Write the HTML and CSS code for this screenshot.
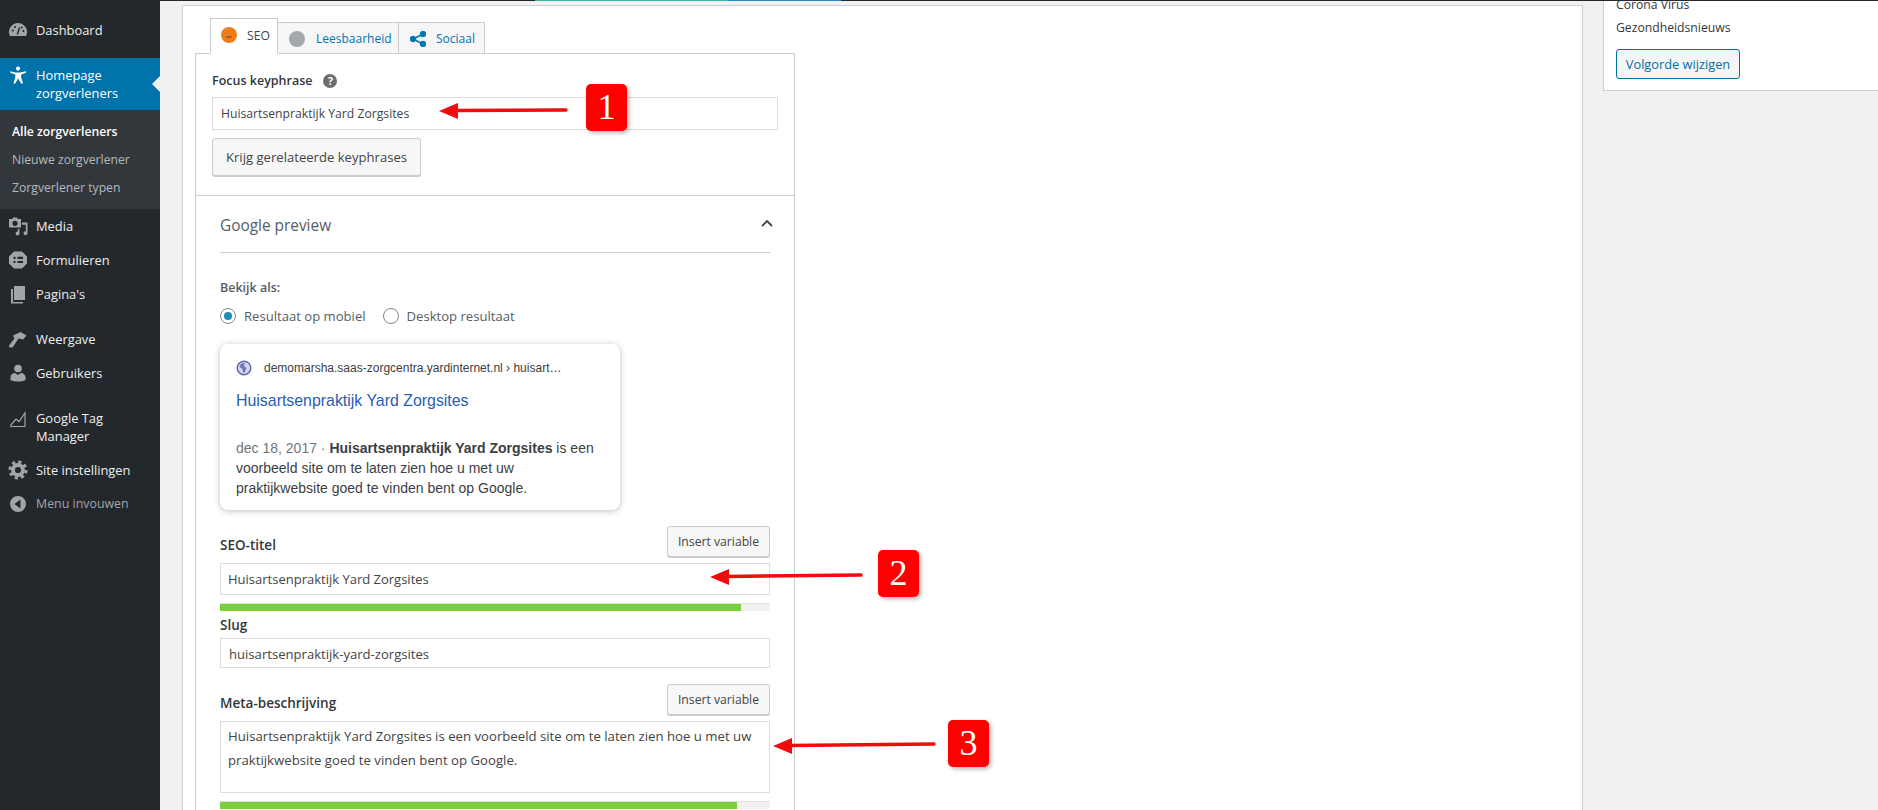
FILE: index.html
```html
<!DOCTYPE html>
<html lang="nl">
<head>
<meta charset="utf-8">
<title>Homepage zorgverleners</title>
<link rel="stylesheet" href="styles.css">
</head>
<body>
<div class="page">
  <div class="strip"><i class="s-dark-a"></i><i class="s-teal"></i><i class="s-blue"></i><i class="s-dark-b"></i></div>
  <div class="layout">
    <nav class="menu">
      <a class="mi"><svg class="ic" viewBox="0 0 20 20"><path d="M10 3a9 9 0 0 0-8.600 11.700c.3.900 1 1.300 1.700 1.300h13.800c.7 0 1.400-.4 1.700-1.300A9 9 0 0 0 10 3z"/><path class="cut" d="M9.300 14.500 11.600 7.500" stroke-width="1.400"/><circle class="cutf" cx="4.800" cy="10.500" r="1"/><circle class="cutf" cx="7" cy="7" r="1"/><circle class="cutf" cx="13.800" cy="7.600" r="1"/><circle class="cutf" cx="15.400" cy="11" r="1"/></svg><span>Dashboard</span></a>
      <div class="group">
        <a class="mi active"><svg class="ic" viewBox="0 0 20 20"><circle cx="10" cy="3.600" r="2.100"/><path d="M2.200 6.200 7.600 7.400h4.800l5.400-1.200.4 1.500-5 1.700v3l1.900 6.200h-1.900L10 13.400l-2.700 5.200H5.400l1.900-6.200v-3l-5-1.700z"/></svg><span>Homepage zorgverleners</span></a>
        <div class="sub">
          <a class="si on">Alle zorgverleners</a>
          <a class="si">Nieuwe zorgverlener</a>
          <a class="si">Zorgverlener typen</a>
        </div>
      </div>
      <a class="mi"><svg class="ic" viewBox="0 0 20 20"><path d="M1 3h3.200l1-1.500h3.600l1 1.500H13v8.500H1zm6 1.700a2.600 2.600 0 1 0 0 5.200 2.600 2.600 0 0 0 0-5.200z" fill-rule="evenodd"/><path d="M14 6.500h5.500v10.700a2 2 0 1 1-1.700-2V8.800H14z"/><path d="M11.500 13v4.500a2 2 0 1 1-1.700-2V13z"/></svg><span>Media</span></a>
      <a class="mi"><svg class="ic" viewBox="0 0 20 20"><path d="M6 1.500h8l5 5v7l-5 5H6l-5-5v-7z" stroke-linejoin="round"/><path class="cut" d="M5.500 7.800h2M9.500 7.800h5.500M5.500 12h2M9.500 12h5.500" stroke-width="2.200"/></svg><span>Formulieren</span></a>
      <a class="mi"><svg class="ic" viewBox="0 0 20 20"><path d="M6 2h11v14H6z"/><path d="M3 5h2v13h10v1.500H3z"/></svg><span>Pagina's</span></a>
      <a class="mi sep"><svg class="ic" viewBox="0 0 20 20"><path d="M5 6.500 12.500 3l6 3.500-3.500 4-4.500-1L4.500 18.500H1.500L1 16.500l5.500-7z"/></svg><span>Weergave</span></a>
      <a class="mi"><svg class="ic" viewBox="0 0 20 20"><circle cx="10" cy="5.500" r="3.800"/><path d="M2.500 17v-2.500c0-3 2.500-4.500 4.500-4.500l3 2 3-2c2 0 4.500 1.500 4.500 4.500V17c-2 1-5 1.500-7.500 1.500S4.500 18 2.500 17z"/></svg><span>Gebruikers</span></a>
      <a class="mi sep"><svg class="ic line" viewBox="0 0 20 20"><path d="M2 18.500h15.500M2.500 17.500 8 11l3 2.500L17 5v13" stroke-width="1.200"/></svg><span>Google Tag Manager</span></a>
      <a class="mi"><svg class="ic line" viewBox="0 0 20 20"><circle cx="10" cy="10" r="8" stroke-width="3" stroke-dasharray="3.200 3.080"/><circle cx="10" cy="10" r="5" stroke-width="3.800"/></svg><span>Site instellingen</span></a>
      <a class="mi collapse"><svg class="ic" viewBox="0 0 20 20"><path fill-rule="evenodd" d="M10 2a8 8 0 1 1 0 16 8 8 0 0 1 0-16zM12.500 5.500 6.500 10l6 4.500z"/></svg><span>Menu invouwen</span></a>
    </nav>

    <main class="content">
      <section class="post">
        <div class="tabs">
          <div class="tab current"><span class="dot orange"><i class="face"></i></span><span>SEO</span></div>
          <div class="tab t-read"><span class="dot gray"></span><span class="tl">Leesbaarheid</span></div>
          <div class="tab t-social"><svg class="share" viewBox="0 0 16 16"><circle cx="13" cy="3" r="2.800"/><circle cx="3" cy="8" r="2.800"/><circle cx="13" cy="13" r="2.800"/><path d="M13 3 3 8l10 5" fill="none" stroke-width="1.600"/></svg><span class="tl">Sociaal</span></div>
        </div>
        <div class="panel">
          <div class="focus">
            <div class="focus-label"><label class="lbl">Focus keyphrase</label><span class="help">?</span></div>
            <div class="field f-focus">Huisartsenpraktijk Yard Zorgsites</div>
            <button class="btn btn-big">Krijg gerelateerde keyphrases</button>
          </div>
          <div class="preview">
            <div class="pv-head"><span class="pv-title">Google preview</span><svg class="chev" viewBox="0 0 14 10"><path d="M2 8 7 3l5 5" fill="none"/></svg></div>
            <div class="lbl lbl-view">Bekijk als:</div>
            <div class="radios">
              <span class="radio checked"></span><span class="rl">Resultaat op mobiel</span>
              <span class="radio second"></span><span class="rl">Desktop resultaat</span>
            </div>
            <article class="card">
              <div class="c-url"><svg class="globe" viewBox="0 0 16 16"><circle cx="8" cy="8" r="6.800" fill="#d4d8ee" stroke="#5f6bab" stroke-width="1.500"/><path d="M5 3.500 9 3 8 6 10.500 8 9 12 7 13 6.500 9 3.500 7z" fill="#6f7ab8"/></svg><span>demomarsha.saas-zorgcentra.yardinternet.nl › huisart…</span></div>
              <div class="c-title">Huisartsenpraktijk Yard Zorgsites</div>
              <p class="c-text"><span class="c-date">dec 18, 2017 · </span><b>Huisartsenpraktijk Yard Zorgsites</b> is een voorbeeld site om te laten zien hoe u met uw praktijkwebsite goed te vinden bent op Google.</p>
            </article>
            <div class="row r-seo"><label class="lbl">SEO-titel</label><button class="btn btn-var">Insert variable</button></div>
            <div class="field f-seo">Huisartsenpraktijk Yard Zorgsites</div>
            <div class="progress"><i style="width:94.7%"></i></div>
            <label class="lbl lbl-slug">Slug</label>
            <div class="field f-slug">huisartsenpraktijk-yard-zorgsites</div>
            <div class="row r-meta"><label class="lbl">Meta-beschrijving</label><button class="btn btn-var">Insert variable</button></div>
            <div class="field f-meta">Huisartsenpraktijk Yard Zorgsites is een voorbeeld site om te laten zien hoe u met uw praktijkwebsite goed te vinden bent op Google.</div>
            <div class="progress"><i style="width:94%"></i></div>
          </div>
        </div>
      </section>
      <aside class="side">
        <div class="side-item">Corona Virus</div>
        <div class="side-item">Gezondheidsnieuws</div>
        <button class="btn-order">Volgorde wijzigen</button>
      </aside>
    </main>
  </div>

  <svg class="arrows" viewBox="0 0 1878 810">
    <path d="M566 110 456 110.500" stroke-width="3.500"/><path class="head" d="M439 111 458 103v16z"/>
    <path d="M861 575 727 576.500" stroke-width="3.500"/><path class="head" d="M710 577 729 569v16z"/>
    <path d="M934 744 790 745.500" stroke-width="3.500"/><path class="head" d="M773 746 792 738v16z"/>
  </svg>
  <div class="badge b1">1</div>
  <div class="badge b2">2</div>
  <div class="badge b3">3</div>
</div>
</body>
</html>
```
FILE: styles.css
```css
* { box-sizing: border-box; }
html, body { margin: 0; padding: 0; }
body { font-family: "Open Sans", "Noto Sans", sans-serif; font-size: 12.2px; color: #32373c; }

.page { position: relative; width: 1878px; height: 810px; overflow: hidden; background: #f1f1f1; }

.strip { position: relative; z-index: 2; display: flex; height: 1px; }
.strip i { display: block; height: 1px; }
.s-dark-a { width: 535px; background: #23282d; }
.s-teal { width: 193px; background: #3fb5a8; }
.s-blue { width: 113px; background: #2c8ab5; }
.s-dark-b { flex: 1; background: #23282d; }

.layout { display: flex; height: 809px; }

/* admin menu */
.menu { width: 160px; flex: none; background: #23282d; padding-top: 12px; color: #eee; }
.mi { display: flex; align-items: flex-start; min-height: 34px; padding: 8px 12px 8px 36px; position: relative; line-height: 18px; font-size: 12.9px; }
.mi .ic { position: absolute; left: 8px; top: 7px; width: 20px; height: 20px; fill: #a0a5aa; stroke: none; }
.mi .ic .cut { stroke: #23282d; fill: none; }
.mi .ic .cutf { fill: #23282d; }
.mi .ic.line { fill: none; stroke: #a0a5aa; }
.sep { margin-top: 11px; }
.group { margin: 11px 0 0; }
.active { background: #0073aa; color: #fff; }
.active .ic { fill: #fff; }
.active::after { content: ""; position: absolute; right: 0; top: 18px; border: 8px solid transparent; border-right-color: #f1f1f1; border-left-width: 0; }
.sub { background: #32373c; padding: 8px 0 7px; }
.si { display: block; height: 28px; line-height: 28px; padding-left: 12px; color: #b4b9be; font-size: 12.2px; }
.si.on { color: #fff; font-weight: 600; }
.collapse { color: #a0a5aa; font-size: 12.400px; }

/* content */
.content { flex: 1; display: flex; align-items: flex-start; padding: 4px 0 0 22px; min-width: 0; }
.post { width: 1401px; height: 810px; flex: none; background: #fff; border: 1px solid #ccd0d4; padding: 12px 0 0 12px; }
.side { flex: 1; margin: -20px 0 0 20px; height: 106px; background: #fff; border: 1px solid #ccd0d4; border-right: none; padding: 7px 12px 0; }
.side-item { height: 23px; line-height: 23px; font-size: 12.2px; }
.btn-order { display: block; width: 124px; height: 30px; margin-top: 10px; padding: 0; border: 1px solid #0071a1; border-radius: 3px; background: #f3f5f6; color: #0071a1; font: inherit; font-size: 12.8px; }

/* tabs */
.tabs { display: flex; align-items: flex-end; padding-left: 15px; height: 36px; margin-bottom: -1px; position: relative; z-index: 1; }
.tab { display: flex; align-items: center; height: 32px; border: 1px solid #ccc; border-left: none; background: #f6f6f6; color: #0075b3; font-size: 12px; }
.t-read { width: 121px; padding-left: 11px; padding-top: 1px; }
.t-social { width: 86px; padding-left: 11px; padding-top: 1px; }
.tab.current { height: 36px; width: 68px; padding: 0 0 2px 10px; background: #fff; color: #444; border-left: 1px solid #ccc; border-bottom: 1px solid #fff; font-size: 12.2px; }
.dot { display: block; flex: none; width: 16px; height: 16px; border-radius: 50%; margin-right: 10px; position: relative; }
.orange { background: #ee7c1b; }
.gray { background: #a4a8ab; margin-right: 11px; }
.face { position: absolute; left: 5px; top: 9px; width: 6px; height: 1.500px; background: #b65c12; }
.share { width: 16px; height: 16px; margin-right: 10px; fill: #0075b3; stroke: #0075b3; flex: none; }

/* panel */
.panel { width: 600px; border: 1px solid #ccc; border-bottom: none; height: 770px; }
.focus { height: 142px; padding: 18px 16px 0; border-bottom: 1px solid #ccc; }
.lbl { display: block; font-weight: 600; color: #32373c; font-size: 12.5px; line-height: 18px; }
.focus-label { display: flex; align-items: center; height: 18px; margin-bottom: 7px; }
.help { width: 14px; height: 14px; margin-left: 11px; border-radius: 50%; background: #6e6e6e; color: #fff; font-size: 10.500px; font-weight: 700; line-height: 14px; text-align: center; }
.field { border: 1px solid #ddd; background: #fff; color: #444; font-size: 13px; }
.f-focus { height: 33px; line-height: 31px; padding-left: 8px; font-size: 12.2px; }
.btn { display: block; background: #f7f7f7; border: 1px solid #ccc; border-radius: 3px; box-shadow: 0 1px 0 #ccc; color: #444; font: inherit; padding: 0; }
.btn-big { width: 209px; height: 38px; margin-top: 8px; font-size: 13.1px; }
.btn-var { width: 103px; height: 31px; font-size: 12.2px; }

.preview { padding: 0 24px; }
.pv-head { display: flex; align-items: center; justify-content: space-between; height: 57px; padding-top: 2px; border-bottom: 1px solid #ccc; }
.pv-title { font-size: 15.400px; color: #555d66; }
.chev { width: 14px; height: 10px; stroke: #444; stroke-width: 1.800; position: relative; top: -2px; left: 4px; }
.lbl-view { margin-top: 26px; color: #555d66; }
.radios { display: flex; align-items: center; height: 20px; margin-top: 9px; color: #555d66; }
.radio { width: 16px; height: 16px; border: 1px solid #7e8993; border-radius: 50%; background: #fff; flex: none; position: relative; margin-right: 8px; }
.radio.checked::before { content: ""; position: absolute; left: 3px; top: 3px; width: 8px; height: 8px; border-radius: 50%; background: #1e8cbe; }
.radio.second { margin-left: 17px; }
.rl { font-size: 13.100px; }

.card { width: 400px; height: 166px; margin-top: 18px; padding: 16px 16px 0; background: #fff; border-radius: 8px; box-shadow: 0 1px 6px rgba(32,33,36,.28); font-family: "Liberation Sans", Arial, sans-serif; }
.c-url { display: flex; align-items: center; height: 16px; font-size: 12px; color: #3c4043; }
.globe { width: 16px; height: 16px; margin-right: 12px; }
.c-title { margin-top: 13px; font-size: 15.900px; line-height: 24px; color: #2a5db0; }
.c-text { margin: 25px 0 0; font-size: 14px; line-height: 20px; color: #3c4043; }
.c-date { color: #70757a; }
.c-text b { color: #3c4043; }

.row { display: flex; align-items: flex-end; justify-content: space-between; height: 31px; }
.row .lbl { margin-bottom: 3px; height: 18px; font-size: 13.500px; }
.r-seo, .r-meta { margin-top: 16px; }
.f-seo { height: 32px; line-height: 30px; padding-left: 7px; margin-top: 6px; }
.progress { height: 8px; margin-top: 8px; background: #f1f1f1; border: 1px solid #e2e2e2; border-width: 1px 0 0 0; overflow: hidden; }
.progress i { display: block; height: 7px; background: #7ad03a; }
.lbl-slug { margin-top: 5px; height: 22px; font-size: 13.500px; }
.f-slug { height: 30px; line-height: 30px; padding-left: 8px; font-size: 13.100px; }
.f-meta { height: 72px; line-height: 24px; padding: 2px 6px 0 7px; margin-top: 6px; font-size: 13.200px; }

/* annotations */
.arrows { position: absolute; left: 0; top: 0; width: 1878px; height: 810px; fill: none; stroke: #ee0c0c; stroke-linecap: round; pointer-events: none; z-index: 3; }
.arrows .head { fill: #ee0c0c; stroke: none; }
.badge { position: absolute; z-index: 3; width: 41px; height: 47px; background: #f00; border-radius: 5px; box-shadow: 2px 2px 4px rgba(0,0,0,.3); color: #fff; font-family: "Liberation Serif", "Times New Roman", serif; font-size: 36px; line-height: 47px; text-align: center; }
.b1 { left: 586px; top: 84px; }
.b2 { left: 878px; top: 550px; }
.b3 { left: 948px; top: 720px; }
```
